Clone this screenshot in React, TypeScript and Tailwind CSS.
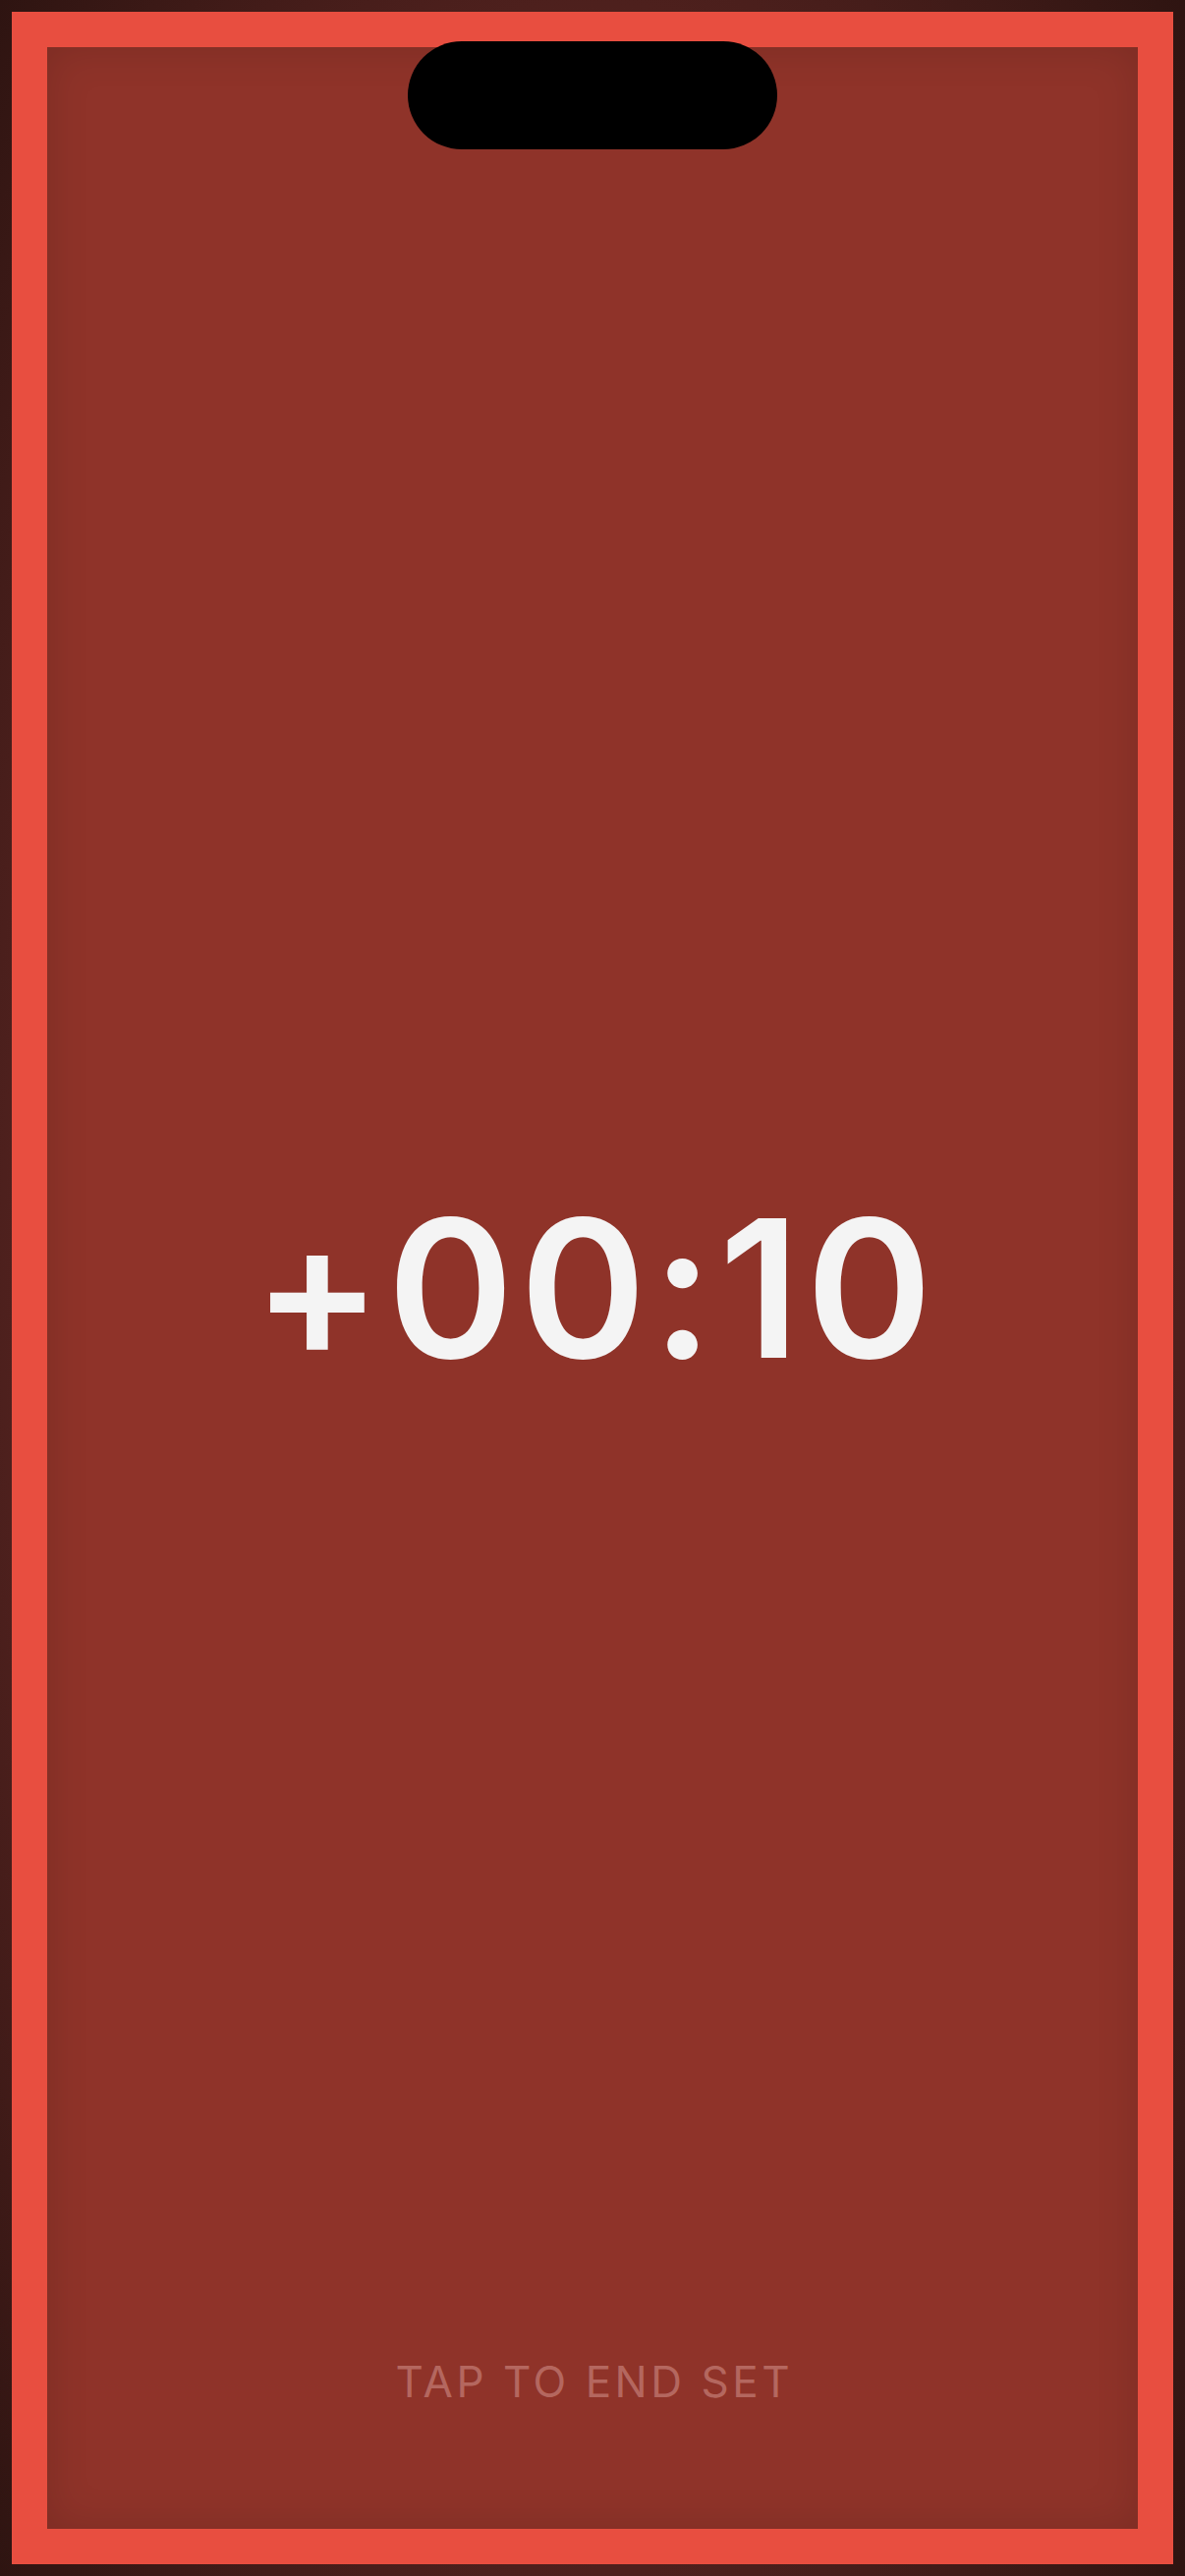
import React from "react";

export default function App() {
  return (
    <div className="w-[1206px] h-[2622px] bg-[radial-gradient(ellipse_at_center,#52221e_0%,#50211e_68%,#2e1411_100%)] p-[12px] relative">
      <div className="w-full h-full border-[36px] border-[#e84e40] relative">
        <div
          className="w-full h-full bg-[#8f3329] flex flex-col shadow-[inset_0_0_44px_rgba(0,0,0,0.14)]"
          style={{ fontFamily: "Inter, 'Noto Sans', sans-serif" }}
        >
          <div className="h-[175px] shrink-0" />
          <div className="flex-1 flex items-center justify-center">
            <div className="text-[195px] leading-none font-semibold tracking-[6px] pl-[6px] text-[#f4f4f4]">
              +00:10
            </div>
          </div>
          <div className="h-[175px] shrink-0 flex justify-center">
            <div className="text-[44px] leading-[50px] tracking-[0.08em] pl-[0.08em] text-[#b4675f] font-normal">
              TAP TO END SET
            </div>
          </div>
        </div>
      </div>
      <div className="absolute top-[42px] left-1/2 -translate-x-1/2 w-[376px] h-[110px] rounded-full bg-black" />
    </div>
  );
}
